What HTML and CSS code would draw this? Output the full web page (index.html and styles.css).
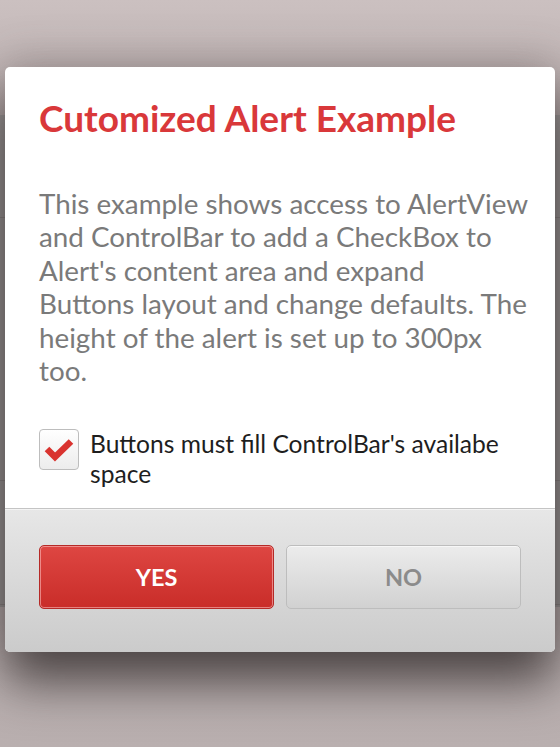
FILE: index.html
```html
<!DOCTYPE html>
<html>
<head>
<meta charset="utf-8">
<link rel="stylesheet" href="styles.css">
</head>
<body>
<div class="app">
  <div class="app-top"></div>
  <div class="app-panel">
    <div class="app-row r1"></div>
    <div class="app-row r2"></div>
    <div class="app-row r3"></div>
  </div>
</div>
<div class="dialog">
  <div class="content">
    <h1 class="title">Cutomized Alert Example</h1>
    <p class="message">This example shows access to AlertView<br>and ControlBar to add a CheckBox to<br>Alert's content area and expand<br>Buttons layout and change defaults. The<br>height of the alert is set up to 300px<br>too.</p>
    <label class="check-row">
      <span class="box">
        <svg width="40" height="41" viewBox="0 0 40 41"><polyline points="8,20 16,28 32,12.5" fill="none" stroke="#d9332f" stroke-width="6.5" stroke-linecap="butt" stroke-linejoin="miter"/></svg>
      </span>
      <span class="check-label">Buttons must fill ControlBar's availabe space</span>
    </label>
  </div>
  <div class="footer">
    <button class="btn yes">YES</button>
    <button class="btn no">NO</button>
  </div>
</div>
</body>
</html>
```

FILE: styles.css
```css
html, body {
  margin: 0;
  padding: 0;
}
body {
  width: 560px;
  height: 747px;
  overflow: hidden;
  position: relative;
  background: linear-gradient(#cbc0c0, #b9afaf);
  font-family: Lato, "Liberation Sans", sans-serif;
}
.app {
  display: flex;
  flex-direction: column;
}
.app-top {
  height: 115px;
  background: linear-gradient(#cbc0c0 0%, #c2b7b7 60%, #b3a8a8 100%);
}
.app-panel {
  height: 492px;
  background: #9d9a9a;
  display: flex;
  flex-direction: column;
}
.app-row {
  border-bottom: 1px solid #8a8686;
}
.r1 { height: 102px; }
.r2 { height: 262px; }
.r3 { height: 123px; }
.dialog {
  position: absolute;
  left: 5px;
  top: 67px;
  width: 550px;
  height: 585px;
  border-radius: 5px;
  background: #fff;
  display: flex;
  flex-direction: column;
  overflow: hidden;
  box-shadow: 0 30px 50px 0 rgba(40, 34, 34, 0.75), 0 -10px 40px rgba(90, 80, 80, 0.25);
}
.content {
  flex: 1;
  padding: 30px 10px 0 34px;
}
.title {
  margin: 0;
  font-size: 37px;
  line-height: 42px;
  font-weight: 700;
  color: #d9383a;
  letter-spacing: 0;
}
.message {
  margin: 48px 0 0 0;
  font-size: 27.8px;
  line-height: 33.4px;
  color: #7a7a7a;
  font-weight: 400;
  white-space: nowrap;
}
.check-row {
  display: flex;
  align-items: flex-start;
  gap: 11px;
  margin-top: 42px;
}
.box {
  flex: none;
  width: 40px;
  height: 41px;
  box-sizing: border-box;
  border: 1px solid #bdbdbd;
  border-radius: 4px;
  background: linear-gradient(#ffffff, #ececec);
  display: flex;
}
.box svg {
  margin: -1px;
}
.check-label {
  font-size: 24.6px;
  line-height: 30px;
  color: #1e1e1e;
  margin-top: 0;
  max-width: 440px;
}
.footer {
  height: 144px;
  box-sizing: border-box;
  border-top: 1px solid #c4c4c4;
  background: linear-gradient(#e7e7e7, #cbcbcb);
  display: flex;
  gap: 12px;
  padding: 36px 34px 0 34px;
  box-shadow: inset 0 1px 0 #f4f4f4;
}
.btn {
  flex: 1;
  height: 64px;
  border-radius: 5px;
  font-family: Lato, "Liberation Sans", sans-serif;
  font-weight: 700;
  font-size: 23.5px;
  padding: 0;
}
.yes {
  color: #fff;
  border: 1px solid #b52a27;
  background: linear-gradient(#de4642, #c92d29);
  box-shadow: inset 0 0 0 1px rgba(255, 200, 200, 0.55);
}
.no {
  color: #8b8b8b;
  border: 1px solid #bdbdbd;
  background: linear-gradient(#ececec, #d1d1d1);
  box-shadow: inset 0 1px 0 #f7f7f7;
}
```
